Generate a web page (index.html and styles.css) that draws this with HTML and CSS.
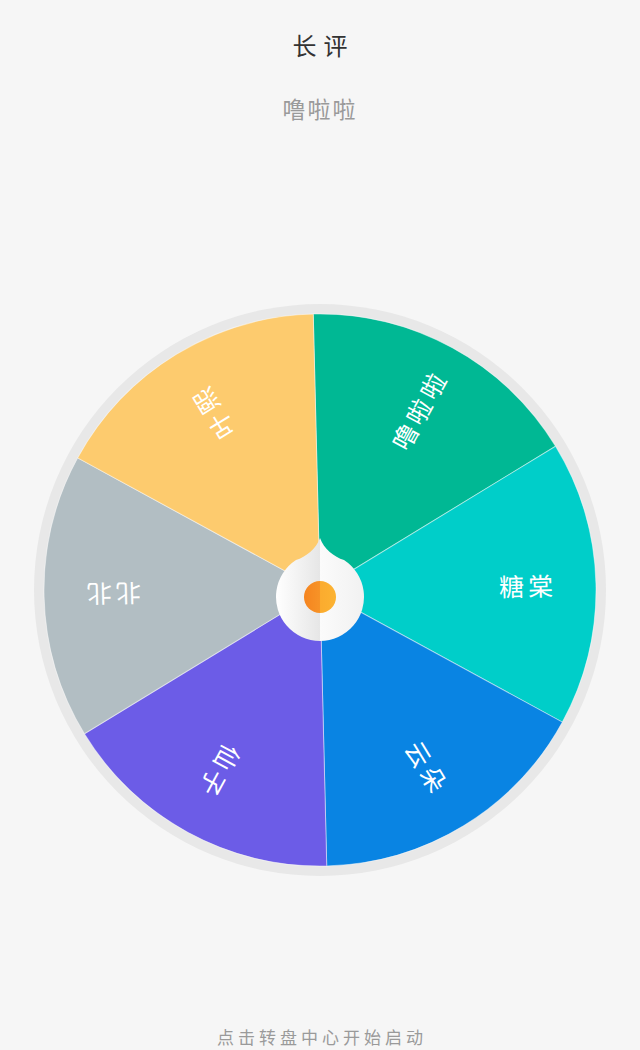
FILE: index.html
```html
<!DOCTYPE html>
<html>
<head>
    <title>长评</title>
    <link rel="stylesheet" href="styles.css">
</head>
<body>
    <div class="page">
        <h1 class="title">长评</h1>
        <p class="subtitle">噜啦啦</p>

        <div class="wheel">
            <svg width="572" height="572" viewBox="0 0 572 572">
                <defs>
                    <linearGradient id="knob" x1="0" y1="0" x2="1" y2="0">
                        <stop offset="0" stop-color="#ffffff"/>
                        <stop offset="0.5" stop-color="#e6e6e6"/>
                        <stop offset="0.5" stop-color="#fbfbfb"/>
                        <stop offset="1" stop-color="#f1f1f1"/>
                    </linearGradient>
                    <linearGradient id="dot" x1="0" y1="0" x2="1" y2="0">
                        <stop offset="0" stop-color="#f5841f"/>
                        <stop offset="0.5" stop-color="#f79327"/>
                        <stop offset="0.5" stop-color="#fbab2e"/>
                        <stop offset="1" stop-color="#fcb332"/>
                    </linearGradient>
                </defs>

                <circle cx="286" cy="286" r="286" fill="#e8e8e8"/>

                <!-- slices, drawn from 12 o'clock clockwise -->
                <g transform="rotate(-1.4 286 286)" class="slices">
                    <path d="M286 286 L286 10 A276 276 0 0 1 525.02 148 Z" fill="#00b894"/>
                    <path d="M286 286 L525.02 148 A276 276 0 0 1 525.02 424 Z" fill="#00cec9"/>
                    <path d="M286 286 L525.02 424 A276 276 0 0 1 286 562 Z" fill="#0984e3"/>
                    <path d="M286 286 L286 562 A276 276 0 0 1 46.98 424 Z" fill="#6c5ce7"/>
                    <path d="M286 286 L46.98 424 A276 276 0 0 1 46.98 148 Z" fill="#b2bec3"/>
                    <path d="M286 286 L46.98 148 A276 276 0 0 1 286 10 Z" fill="#fdcb6e"/>

                    <g class="labels">
                        <text transform="translate(286 286) rotate(-60) translate(206 0)">噜啦啦</text>
                        <text transform="translate(286 286) rotate(0) translate(208 0)">糖棠</text>
                        <text transform="translate(286 286) rotate(60) translate(208 0)">云朵</text>
                        <text transform="translate(286 286) rotate(120) translate(208 0)">仙子</text>
                        <text transform="translate(286 286) rotate(180) translate(208 0)">北北</text>
                        <text transform="translate(286 286) rotate(240) translate(208 0)">叶熙</text>
                    </g>
                </g>

                <!-- start button -->
                <g transform="translate(286 293)" class="start">
                    <path d="M0 -59 C4 -48 14 -40 24 -37 A44 44 0 1 1 -24 -37 C-14 -40 -4 -48 0 -59 Z" fill="url(#knob)"/>
                    <circle cx="0" cy="0" r="16" fill="url(#dot)"/>
                </g>
            </svg>
        </div>

        <p class="hint">点击转盘中心开始启动</p>
    </div>
</body>
</html>
```

FILE: styles.css
```css
body {
    margin: 0;
    background: #f6f6f6;
    font-family: "Noto Sans CJK SC", "Noto Sans", sans-serif;
    overflow: hidden;
}
.page {
    display: flex;
    flex-direction: column;
    align-items: center;
    height: 1050px;
}
.title {
    margin: 31px 0 0;
    padding-left: 7px;
    font-size: 24px;
    line-height: 28px;
    font-weight: normal;
    letter-spacing: 7px;
    color: #333;
}
.subtitle {
    margin: 35px 0 0;
    font-size: 23px;
    line-height: 28px;
    letter-spacing: 2px;
    color: #9a9a9a;
}
.wheel {
    margin-top: 182px;
    width: 572px;
    height: 572px;
}
.wheel svg {
    display: block;
}
.slices path {
    stroke: rgba(255,255,255,0.45);
    stroke-width: 1;
}
.labels text {
    fill: #fff;
    font-size: 25px;
    letter-spacing: 4px;
    text-anchor: middle;
    dominant-baseline: central;
}
.start {
    cursor: pointer;
}
.hint {
    margin: 150px 0 0;
    font-size: 17px;
    line-height: 22px;
    letter-spacing: 4px;
    padding-left: 4px;
    color: #9a9a9a;
}
```
